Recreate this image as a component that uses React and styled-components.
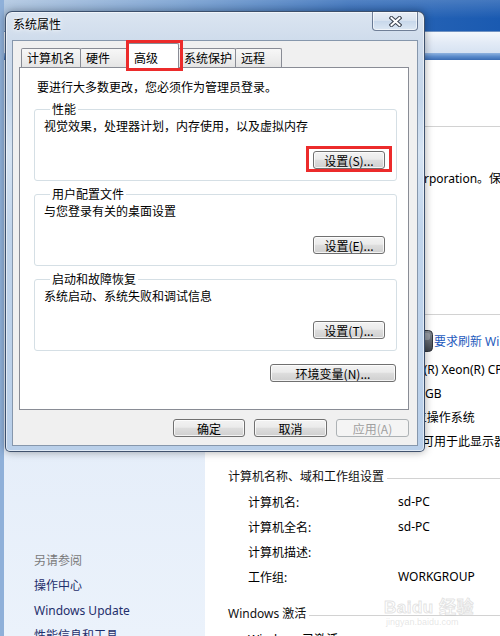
import React from "react";
import styled, { createGlobalStyle } from "styled-components";

const UI_FONT = `"Noto Sans", "Noto Sans CJK SC", sans-serif`;
const DLG_FONT = `"Noto Sans CJK SC", "Noto Sans", sans-serif`;

const GlobalStyle = createGlobalStyle`
  * { box-sizing: border-box; }
  html, body { margin: 0; padding: 0; width: 500px; height: 636px; overflow: hidden; background: #fff; }
  #root { position: relative; width: 500px; height: 636px; overflow: hidden; }
`;

/* ---------- background control-panel window ---------- */
const BgWindow = styled.div`
  width: 500px;
  height: 636px;
  display: flex;
  flex-direction: column;
  border-left: 4px solid #8fb0d9;
  font-family: ${UI_FONT};
  font-size: 12px;
  color: #000;
`;

const BgTitle = styled.div`
  height: 31px;
  flex-shrink: 0;
  background:
    linear-gradient(180deg, rgba(255,255,255,0.18), rgba(255,255,255,0) 60%),
    linear-gradient(90deg, #aac2de 0%, #6f9ace 35%, #2d68b7 70%, #1a5ab1 100%);
`;

const BgToolbar = styled.div`
  height: 22px;
  flex-shrink: 0;
  border-top: 1px solid #6f92c2;
  background: linear-gradient(180deg, #f4f8fc 0%, #e3ebf6 50%, #d6e2f2 100%);
`;

const BgBand = styled.div`
  height: 7px;
  flex-shrink: 0;
  background: linear-gradient(180deg, #8fb3e0 0%, #5b8bcb 50%, #3a6cb4 100%);
`;

const BgBody = styled.div`
  flex: 1;
  min-height: 0;
  display: flex;
  overflow: hidden;
`;

const Sidebar = styled.div`
  width: 201px;
  flex-shrink: 0;
  display: flex;
  flex-direction: column;
  padding: 8px 0 0 30px;
  background: linear-gradient(180deg, #dbe6f5 0%, #e4edf9 60%, #ebf2fb 100%);
`;

const SideItem = styled.div`
  height: 25px;
  line-height: 25px;
  flex-shrink: 0;
  white-space: nowrap;
  margin-top: ${(p) => p.$mt || 0}px;
  color: ${(p) => (p.$muted ? "#7a7a7a" : "#1f2f6b")};
`;

const Main = styled.div`
  flex: 1;
  min-width: 0;
  display: flex;
  flex-direction: column;
  padding-left: 23px;
  background: #fff;
  overflow: hidden;
  white-space: nowrap;
`;

const PageHeading = styled.div`
  height: 51px;
  flex-shrink: 0;
  padding-top: 14px;
  font-size: 15px;
  color: #1e3287;
`;

const SectionHead = styled.div`
  height: 26px;
  flex-shrink: 0;
  display: flex;
  align-items: center;
  margin-top: ${(p) => p.$mt || 0}px;
  color: #111;
`;

const HeadLine = styled.div`
  flex: 1;
  height: 1px;
  margin: 5px 0 0 3px;
  background: #d2d2d2;
`;

const InfoRow = styled.div`
  height: ${(p) => p.$h || 25}px;
  flex-shrink: 0;
  display: flex;
  align-items: center;
  padding-left: ${(p) => (p.$pl != null ? p.$pl : 20)}px;
`;

const InfoLabel = styled.div`
  width: 150px;
  flex-shrink: 0;
`;

const InfoValue = styled.div`
  display: flex;
  align-items: center;
  gap: 1px;
`;

const Link = styled.span`
  color: #1f5bbd;
`;

const RatingIcon = () => (
  <svg width="16" height="22" viewBox="0 0 16 22" style={{ marginLeft: 19 }}>
    <defs>
      <linearGradient id="ri" x1="0" y1="0" x2="0" y2="1">
        <stop offset="0" stopColor="#8a9098" />
        <stop offset="1" stopColor="#3e444c" />
      </linearGradient>
    </defs>
    <rect x="0.5" y="0.5" width="15" height="21" rx="4" fill="url(#ri)" stroke="#30353c" />
    <rect x="3" y="3" width="10" height="7" rx="2" fill="#b7bcc3" opacity="0.5" />
  </svg>
);

/* ---------- dialog ---------- */
const Dialog = styled.div`
  position: absolute;
  left: 5px;
  top: 11px;
  width: 420px;
  height: 441px;
  display: flex;
  flex-direction: column;
  padding: 0 6px 5px 6px;
  border: 1px solid rgba(36, 56, 86, 0.85);
  border-radius: 7px 7px 5px 5px;
  background: linear-gradient(180deg, #dbe5f1 0%, #cedbeb 7%, #c4d6eb 20%, #d6e4f3 32%, #c0d4eb 50%, #b9cfe9 100%);
  box-shadow: 0 0 8px rgba(0, 0, 0, 0.35), inset 0 0 0 1px rgba(255, 255, 255, 0.55);
  font-family: ${DLG_FONT};
  font-size: 12px;
  color: #000;
`;

const TitleBar = styled.div`
  height: 28px;
  flex-shrink: 0;
  display: flex;
  justify-content: space-between;
  align-items: flex-start;
`;

const TitleText = styled.div`
  margin: 5px 0 0 1px;
  line-height: 14px;
  text-shadow: 0 0 6px #fff, 0 0 3px #fff;
`;

const CloseBtn = styled.div`
  width: 46px;
  height: 19px;
  display: flex;
  align-items: center;
  justify-content: center;
  border: 1px solid rgba(48, 68, 100, 0.65);
  border-top: none;
  border-radius: 0 0 4px 4px;
  background: linear-gradient(180deg, #e8eef6 0%, #d7e2ef 50%, #c8d8eb 52%, #dce7f3 100%);
  box-shadow: inset 0 0 0 1px rgba(255, 255, 255, 0.6);
`;

const CloseGlyph = () => (
  <svg width="13" height="11" viewBox="0 0 13 11">
    <path d="M2.5 2 L10.5 9 M10.5 2 L2.5 9" stroke="#3b4350" strokeWidth="4" strokeLinecap="square" />
    <path d="M2.5 2 L10.5 9 M10.5 2 L2.5 9" stroke="#fff" strokeWidth="2" strokeLinecap="square" />
  </svg>
);

const Client = styled.div`
  flex: 1;
  display: flex;
  flex-direction: column;
  padding: 2px 8px 0 6px;
  background: #f0f0f0;
  border: 1px solid #8697ac;
`;

const TabStrip = styled.div`
  height: 25px;
  flex-shrink: 0;
  display: flex;
  align-items: flex-end;
  padding-left: 2px;
`;

const Tab = styled.div`
  width: ${(p) => p.$w}px;
  height: ${(p) => (p.$active ? 25 : 20)}px;
  flex-shrink: 0;
  margin-left: ${(p) => (p.$first ? 0 : -1)}px;
  padding: ${(p) => (p.$active ? "7px 0 0 6px" : "2px 0 0 5px")};
  line-height: 14px;
  white-space: nowrap;
  border: 1px solid #898c95;
  border-bottom: none;
  border-radius: 2px 2px 0 0;
  background: ${(p) => (p.$active ? "#fff" : "linear-gradient(180deg, #f7f7f7 0%, #eeeeee 50%, #e3e3e3 100%)")};
  position: ${(p) => (p.$active ? "relative" : "static")};
  z-index: ${(p) => (p.$active ? 2 : "auto")};

  ${(p) =>
    p.$active &&
    `
    &::after {
      content: "";
      position: absolute;
      left: -2px;
      right: -5px;
      top: -4px;
      bottom: -3px;
      border: 3px solid #ec2b2b;
      pointer-events: none;
    }
  `}
`;

const Panel = styled.div`
  position: relative;
  z-index: 1;
  margin-top: -1px;
  height: 343px;
  flex-shrink: 0;
  display: flex;
  flex-direction: column;
  padding: 12px 11px 0 14px;
  background: #fff;
  border: 1px solid #898c95;
`;

const Intro = styled.div`
  margin-left: 3px;
  line-height: 14px;
`;

const Group = styled.fieldset`
  margin: ${(p) => (p.$first ? 8 : 6)}px 0 0 0;
  padding: 3px 11px 11px 9px;
  border: 1px solid #d5dfe5;
  border-radius: 3px;
  min-width: 0;
`;

const Legend = styled.legend`
  margin-left: 6px;
  padding: 0 2px;
  line-height: 14px;
`;

const GroupText = styled.div`
  line-height: 14px;
`;

const ButtonLine = styled.div`
  display: flex;
  justify-content: flex-end;
  margin-top: ${(p) => p.$mt || 0}px;
  margin-right: ${(p) => p.$mr || 0}px;
  gap: ${(p) => p.$gap || 0}px;
`;

const Marked = styled.div`
  position: relative;
  display: flex;
  &::after {
    content: "";
    position: absolute;
    left: -7px;
    right: -7px;
    top: -5px;
    bottom: -3px;
    border: 3px solid #ec2b2b;
    pointer-events: none;
  }
`;

const Btn = styled.button`
  width: ${(p) => p.$w || 72}px;
  height: 18px;
  padding: 0;
  border: 1px solid #707070;
  border-radius: 3px;
  background: linear-gradient(180deg, #f3f3f3 0%, #ebebeb 45%, #dddddd 52%, #cfcfcf 100%);
  box-shadow: inset 0 0 0 1px rgba(255, 255, 255, 0.75);
  font-family: ${DLG_FONT};
  font-size: 12px;
  line-height: 15px;
  color: #000;
  white-space: nowrap;

  &:disabled {
    border-color: #adb2b5;
    background: #f4f4f4;
    color: #a0a0a0;
    box-shadow: none;
  }
`;

/* ---------- overlays ---------- */
const ArrowLayer = styled.svg`
  position: absolute;
  left: 0;
  top: 0;
  width: 500px;
  height: 636px;
  pointer-events: none;
`;

const Watermark = styled.div`
  position: absolute;
  left: 384px;
  top: 598px;
  display: flex;
  flex-direction: column;
  align-items: flex-start;
  pointer-events: none;
  color: rgba(255, 255, 255, 0.4);
  -webkit-text-stroke: 1px rgba(185, 185, 185, 0.4);
`;

const WmMain = styled.div`
  font-family: "Liberation Sans", "Noto Sans CJK SC", sans-serif;
  font-weight: bold;
  font-size: 17px;
  line-height: 19px;
  letter-spacing: 0.5px;
`;

const WmSub = styled.div`
  font-family: "Liberation Sans", sans-serif;
  font-size: 9px;
  line-height: 10px;
  margin-left: 2px;
  -webkit-text-stroke: 0;
  color: rgba(180, 180, 180, 0.35);
`;

const tabs = [
  { label: "计算机名", w: 60 },
  { label: "硬件", w: 48 },
  { label: "高级", w: 52, active: true },
  { label: "系统保护", w: 58 },
  { label: "远程", w: 47 },
];

const groups = [
  { title: "性能", text: "视觉效果，处理器计划，内存使用，以及虚拟内存", btn: "设置(S)...", marked: true },
  { title: "用户配置文件", text: "与您登录有关的桌面设置", btn: "设置(E)..." },
  { title: "启动和故障恢复", text: "系统启动、系统失败和调试信息", btn: "设置(T)..." },
];

const sysRows = [
  { label: "处理器:", value: "Intel(R) Xeon(R) CPU E5-2630 0 @ 2.30GHz" },
  { label: "安装内存(RAM):", value: "4.00 GB" },
  { label: "系统类型:", value: "64 位操作系统" },
  { label: "笔和触摸:", value: "没有可用于此显示器的笔或触控输入" },
];

const nameRows = [
  { label: "计算机名:", value: "sd-PC" },
  { label: "计算机全名:", value: "sd-PC" },
  { label: "计算机描述:", value: "" },
  { label: "工作组:", value: "WORKGROUP" },
];

export default function App() {
  return (
    <>
      <GlobalStyle />
      <BgWindow>
        <BgTitle />
        <BgToolbar />
        <BgBand />
        <BgBody>
          <Sidebar>
            <SideItem>控制面板主页</SideItem>
            <SideItem $mt={12}>设备管理器</SideItem>
            <SideItem>远程设置</SideItem>
            <SideItem>系统保护</SideItem>
            <SideItem>高级系统设置</SideItem>
            <SideItem $muted $mt={343}>另请参阅</SideItem>
            <SideItem>操作中心</SideItem>
            <SideItem>Windows Update</SideItem>
            <SideItem>性能信息和工具</SideItem>
          </Sidebar>
          <Main>
            <PageHeading>查看有关计算机的基本信息</PageHeading>
            <SectionHead>
              Windows 版本
              <HeadLine />
            </SectionHead>
            <InfoRow $h={27}>Windows 7 旗舰版</InfoRow>
            <InfoRow $h={27} $pl={30}>版权所有 © 2009 Microsoft Corporation。保留所有权利。</InfoRow>
            <InfoRow $h={27}>Service Pack 1</InfoRow>
            <SectionHead $mt={81}>
              系统
              <HeadLine />
            </SectionHead>
            <InfoRow $h={32}>
              <InfoLabel>分级:</InfoLabel>
              <InfoValue>
                <RatingIcon />
                <Link>要求刷新 Windows 体验指数</Link>
              </InfoValue>
            </InfoRow>
            {sysRows.map((r) => (
              <InfoRow key={r.label} $h={24}>
                <InfoLabel>{r.label}</InfoLabel>
                <InfoValue>{r.value}</InfoValue>
              </InfoRow>
            ))}
            <SectionHead $mt={10}>
              计算机名称、域和工作组设置
              <HeadLine />
            </SectionHead>
            {nameRows.map((r) => (
              <InfoRow key={r.label} $h={25}>
                <InfoLabel>{r.label}</InfoLabel>
                <InfoValue>{r.value}</InfoValue>
              </InfoRow>
            ))}
            <SectionHead $mt={11}>
              Windows 激活
              <HeadLine />
            </SectionHead>
            <InfoRow $h={25}>Windows 已激活</InfoRow>
          </Main>
        </BgBody>
      </BgWindow>

      <Dialog>
        <TitleBar>
          <TitleText>系统属性</TitleText>
          <CloseBtn>
            <CloseGlyph />
          </CloseBtn>
        </TitleBar>
        <Client>
          <TabStrip>
            {tabs.map((t, i) => (
              <Tab key={t.label} $w={t.w} $active={t.active} $first={i === 0}>
                {t.label}
              </Tab>
            ))}
          </TabStrip>
          <Panel>
            <Intro>要进行大多数更改，您必须作为管理员登录。</Intro>
            {groups.map((g, i) => (
              <Group key={g.title} $first={i === 0}>
                <Legend>{g.title}</Legend>
                <GroupText>{g.text}</GroupText>
                <ButtonLine $mt={18}>
                  {g.marked ? (
                    <Marked>
                      <Btn $w={72}>{g.btn}</Btn>
                    </Marked>
                  ) : (
                    <Btn $w={72}>{g.btn}</Btn>
                  )}
                </ButtonLine>
              </Group>
            ))}
            <ButtonLine $mt={13} $mr={1}>
              <Btn $w={126}>环境变量(N)...</Btn>
            </ButtonLine>
          </Panel>
          <ButtonLine $mt={9} $gap={9}>
            <Btn $w={72}>确定</Btn>
            <Btn $w={73}>取消</Btn>
            <Btn $w={73} disabled>应用(A)</Btn>
          </ButtonLine>
        </Client>
      </Dialog>

      <ArrowLayer viewBox="0 0 500 636">
        <polygon points="302.4,78.7 301.6,79.3 337.3,129.4 342.3,125.2" fill="#f03838" />
        <polygon points="354,145 346,120.7 332,131.9" fill="#f03838" />
      </ArrowLayer>

      <Watermark>
        <WmMain>Baidu 经验</WmMain>
        <WmSub>jingyan.baidu.com</WmSub>
      </Watermark>
    </>
  );
}
